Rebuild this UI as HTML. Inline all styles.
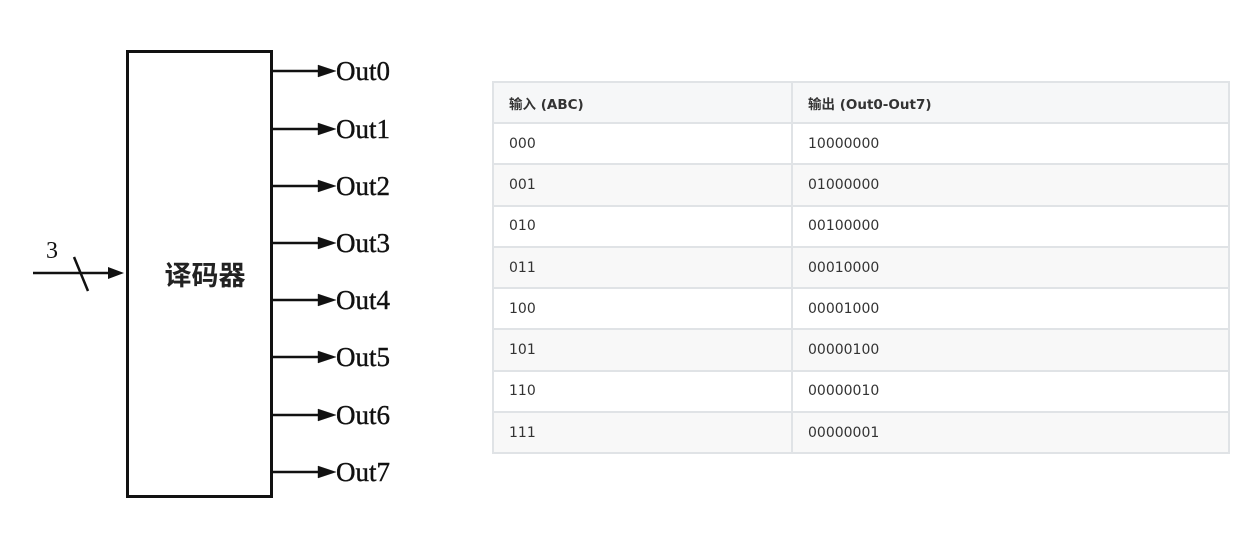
<!DOCTYPE html>
<html><head><meta charset="utf-8"><style>
body{margin:0;width:1244px;height:540px;background:#fff;position:relative;overflow:hidden}
table{position:absolute;left:492px;top:81px;border-collapse:collapse;font-family:"DejaVu Sans","Noto Sans CJK SC",sans-serif;font-size:14px;color:#333}
td,th{border:2px solid #e0e3e6;height:41.3px;padding:0 0 0 15px;text-align:left;box-sizing:border-box}
th{background:#f6f7f8;font-weight:bold;height:41px;font-size:13.5px}
tr:nth-child(odd) td{background:#f8f8f8}
</style></head><body>
<svg width="480" height="540" style="position:absolute;left:0;top:0" font-family="Liberation Serif,serif">
<rect x="127.5" y="51.5" width="144" height="445" fill="none" stroke="#111" stroke-width="3"/>
<g stroke="#111" stroke-width="2.5">
<line x1="33" y1="273" x2="115" y2="273"/>
<line x1="74" y1="257" x2="88" y2="291"/>
</g>
<polygon points="124,273 108,267 108,279" fill="#111"/>
<text x="46" y="258" font-size="24" fill="#111">3</text>
<text x="205" y="285" font-size="27" font-weight="bold" text-anchor="middle" font-family="Noto Sans CJK SC,sans-serif" fill="#222">译码器</text>
<g fill="#111" font-size="27" stroke="#111" stroke-width="0.4">
<g id="o"><line x1="273" y1="71" x2="322" y2="71" stroke="#111" stroke-width="2.5"/><polygon points="336,71 318,65 318,77"/></g>
<use href="#o" y="58"/><use href="#o" y="115"/><use href="#o" y="172"/><use href="#o" y="229"/><use href="#o" y="286"/><use href="#o" y="344"/><use href="#o" y="401"/>
<text x="336" y="80">Out0</text><text x="336" y="138">Out1</text><text x="336" y="195">Out2</text><text x="336" y="252">Out3</text><text x="336" y="309">Out4</text><text x="336" y="366">Out5</text><text x="336" y="424">Out6</text><text x="336" y="481">Out7</text>
</g>
</svg>
<table>
<tr><th style="width:299px">输入 (ABC)</th><th style="width:437px">输出 (Out0-Out7)</th></tr>
<tr><td>000</td><td>10000000</td></tr>
<tr><td>001</td><td>01000000</td></tr>
<tr><td>010</td><td>00100000</td></tr>
<tr><td>011</td><td>00010000</td></tr>
<tr><td>100</td><td>00001000</td></tr>
<tr><td>101</td><td>00000100</td></tr>
<tr><td>110</td><td>00000010</td></tr>
<tr><td>111</td><td>00000001</td></tr>
</table>
</body></html>
